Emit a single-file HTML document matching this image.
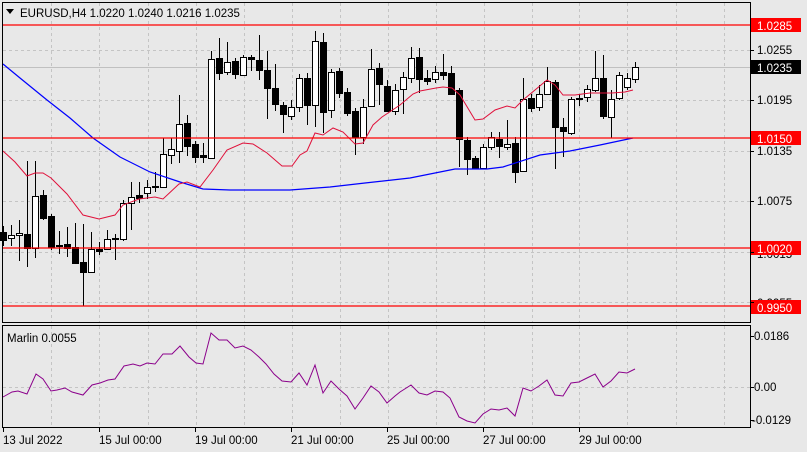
<!DOCTYPE html>
<html><head><meta charset="utf-8"><style>
html,body{margin:0;padding:0;background:#e8e8e8;}
svg{display:block;font-family:"Liberation Sans",sans-serif;}
</style></head><body>
<svg id="s" width="807" height="452" xmlns="http://www.w3.org/2000/svg">
<rect width="807" height="452" fill="#e8e8e8"/>
<g id="grid" stroke="#c4c4c4" stroke-dasharray="3,3" stroke-width="1"></g>
<line x1="2" y1="67.5" x2="750" y2="67.5" stroke="#c0c0c0"/>
<g id="c"></g>
<polyline id="blue" fill="none" stroke="#0000ff" stroke-width="1.2"/>
<polyline id="red" fill="none" stroke="#e0103a" stroke-width="1"/>
<g stroke="#ff0000" stroke-width="1.3">
<line x1="2" y1="25" x2="750" y2="25"/>
<line x1="2" y1="138" x2="750" y2="138"/>
<line x1="2" y1="248" x2="750" y2="248"/>
<line x1="2" y1="306" x2="750" y2="306"/>
</g>
<polyline id="purp" fill="none" stroke="#8b008b" stroke-width="1"/>
<rect x="2.5" y="2.5" width="748" height="320" fill="none" stroke="#000"/>
<rect x="2.5" y="325.5" width="748" height="102" fill="none" stroke="#000"/>
<g font-size="11.5" fill="#000">
<path d="M6 9 L14 9 L10 14 Z" fill="#000"/>
<text x="20" y="17">EURUSD,H4  1.0220 1.0240 1.0216 1.0235</text>
<text x="7" y="342">Marlin 0.0055</text>
<text x="757" y="54">1.0255</text>
<text x="757" y="104">1.0195</text>
<text x="757" y="155">1.0135</text>
<text x="757" y="205">1.0075</text>
<text x="757" y="258">1.0015</text>
<text x="757" y="307">0.9955</text>
<text x="754" y="340">0.0186</text>
<text x="754" y="391">0.00</text>
<text x="752" y="424">-0.0129</text>
<rect x="751" y="18" width="50" height="14" fill="#ff0000"/>
<text x="757" y="30" fill="#fff">1.0285</text>
<rect x="751" y="60" width="50" height="14" fill="#000"/>
<text x="757" y="72" fill="#fff">1.0235</text>
<rect x="751" y="131" width="50" height="14" fill="#ff0000"/>
<text x="757" y="143" fill="#fff">1.0150</text>
<rect x="751" y="241" width="50" height="14" fill="#ff0000"/>
<text x="757" y="253" fill="#fff">1.0020</text>
<rect x="751" y="300" width="50" height="14" fill="#ff0000"/>
<text x="757" y="312" fill="#fff">0.9950</text>
<text x="3" y="444">13 Jul 2022</text>
<text x="99" y="444">15 Jul 00:00</text>
<text x="195" y="444">19 Jul 00:00</text>
<text x="291" y="444">21 Jul 00:00</text>
<text x="387" y="444">25 Jul 00:00</text>
<text x="483" y="444">27 Jul 00:00</text>
<text x="579" y="444">29 Jul 00:00</text>
</g>
<g id="ticks" stroke="#000"></g>
</svg>
<script>
var NS="http://www.w3.org/2000/svg";
function el(p,t,a){var e=document.createElementNS(NS,t);for(var k in a)e.setAttribute(k,a[k]);document.getElementById(p).appendChild(e);return e;}
var vx=[51,99,148,196,244,292,340,388,436,484,532,579,627,676,724];
vx.forEach(function(x){el("grid","line",{x1:x+.5,y1:3,x2:x+.5,y2:322});el("grid","line",{x1:x+.5,y1:326,x2:x+.5,y2:427});});
[50,100,151,201,252,302].forEach(function(y){el("grid","line",{x1:3,y1:y+.5,x2:750,y2:y+.5});});
el("grid","line",{x1:3,y1:387.5,x2:750,y2:387.5});
[50,100,151,201,252,302,336,387,420].forEach(function(y){el("ticks","line",{x1:750,y1:y+.5,x2:754,y2:y+.5});});
[3,99,195,291,387,483,579].forEach(function(x){el("ticks","line",{x1:x+.5,y1:428,x2:x+.5,y2:432});});
var C=[[3,226,232,240,246],[11,225,238,235,246],[19,220,235,233,261],[27,161,234,248,267],[35,161,248,196,258],[43,190,195,218,220],[51,214,216,247,250],[59,231,245,245,254],[67,227,244,248,257],[75,223,247,263,263],[83,224,262,272,306],[91,232,272,249,273],[99,242,249,251,255],[107,230,249,239,250],[115,234,238,238,260],[123,200,239,203,241],[131,182,203,197,230],[139,182,195,198,203],[147,180,193,187,199],[155,172,186,187,192],[163,138,187,154,187],[171,138,155,149,164],[179,95,151,124,163],[187,115,123,146,156],[195,141,144,157,163],[203,143,155,157,163],[211,51,158,59,158],[219,38,58,73,80],[227,42,72,62,75],[235,58,61,74,79],[243,55,75,57,76],[251,55,57,59,71],[259,35,60,70,80],[267,51,70,88,119],[275,64,88,104,111],[283,102,105,114,133],[291,100,116,107,120],[299,74,107,78,112],[307,73,78,105,125],[315,31,105,41,127],[323,33,42,112,133],[331,69,110,72,118],[339,68,71,93,98],[347,88,92,113,116],[355,108,111,137,155],[363,99,137,107,144],[371,49,106,69,107],[379,63,68,84,105],[387,80,86,111,112],[395,84,111,90,115],[403,72,89,77,114],[411,47,78,58,83],[419,48,57,79,93],[427,70,78,81,85],[435,66,79,72,83],[443,54,72,75,80],[451,66,73,94,95],[459,88,90,139,167],[467,137,140,159,175],[475,156,158,168,169],[483,144,168,147,169],[491,132,147,137,150],[499,132,139,146,158],[507,120,147,144,150],[515,137,143,172,183],[523,78,171,99,172],[531,94,98,108,112],[539,85,107,94,111],[547,67,94,81,95],[555,80,82,127,169],[563,118,127,131,157],[571,97,133,99,135],[579,94,98,99,106],[587,85,97,89,102],[595,51,90,78,92],[603,55,78,116,119],[611,90,117,99,138],[619,72,98,75,100],[627,73,87,78,90],[635,62,79,67,83]];
C.forEach(function(c){var x=c[0]+.5;el("c","line",{x1:x,y1:c[1],x2:x,y2:c[4],stroke:"#000"});
var top=Math.min(c[2],c[3]),bot=Math.max(c[2],c[3]);var h=Math.max(bot-top,1);
el("c","rect",{x:c[0]-2.5,y:top+.5,width:6,height:h,fill:c[3]<c[2]?"#fff":"#000",stroke:"#000","stroke-width":1});});
document.getElementById("blue").setAttribute("points","3,64 20,78 47,100 70,118 93,138 120,157 150,172 180,182 203,189 230,190 290,190 330,187 365,183 410,178 455,169 487,169 503,167 540,155 570,151 600,145 633,138");
document.getElementById("red").setAttribute("points","3,151 15,162 27,176 35,173 43,173 51,178 67,194 83,215 99,219 115,215 123,205 139,199 155,197 163,199 179,184 187,182 200,187 213,170 227,150 243,143 253,144 267,153 282,166 292,166 300,155 307,151 315,133 323,135 333,128 343,132 355,144 363,143 373,125 382,117 400,105 413,94 420,91 436,88 443,87 452,88 460,95 475,120 483,119 495,110 507,106 515,108 523,100 547,80 555,85 563,95 575,95 590,93 612,93 625,92 633,90");
document.getElementById("purp").setAttribute("points","3,397 12,392 18,391 27,394 36,374 43,379 51,391 57,390 65,388 72,392 83,395 92,385 100,383 108,380 115,379 124,366 133,364 140,366 147,363 155,364 163,354 172,354 180,346 189,357 196,363 203,364 211,333 219,340 227,340 235,348 243,346 251,350 259,357 266,364 274,374 282,381 291,382 299,373 307,385 315,365 323,393 331,381 339,389 347,396 355,409 363,398 371,386 379,392 387,403 395,396 400,392 411,385 419,393 427,395 435,391 443,392 450,398 459,417 467,421 475,423 483,414 491,409 499,410 507,408 515,416 523,388 531,391 539,386 547,380 555,395 563,396 571,383 579,382 587,378 595,374 603,387 611,381 619,372 627,373 635,369");
</script>
</body></html>
